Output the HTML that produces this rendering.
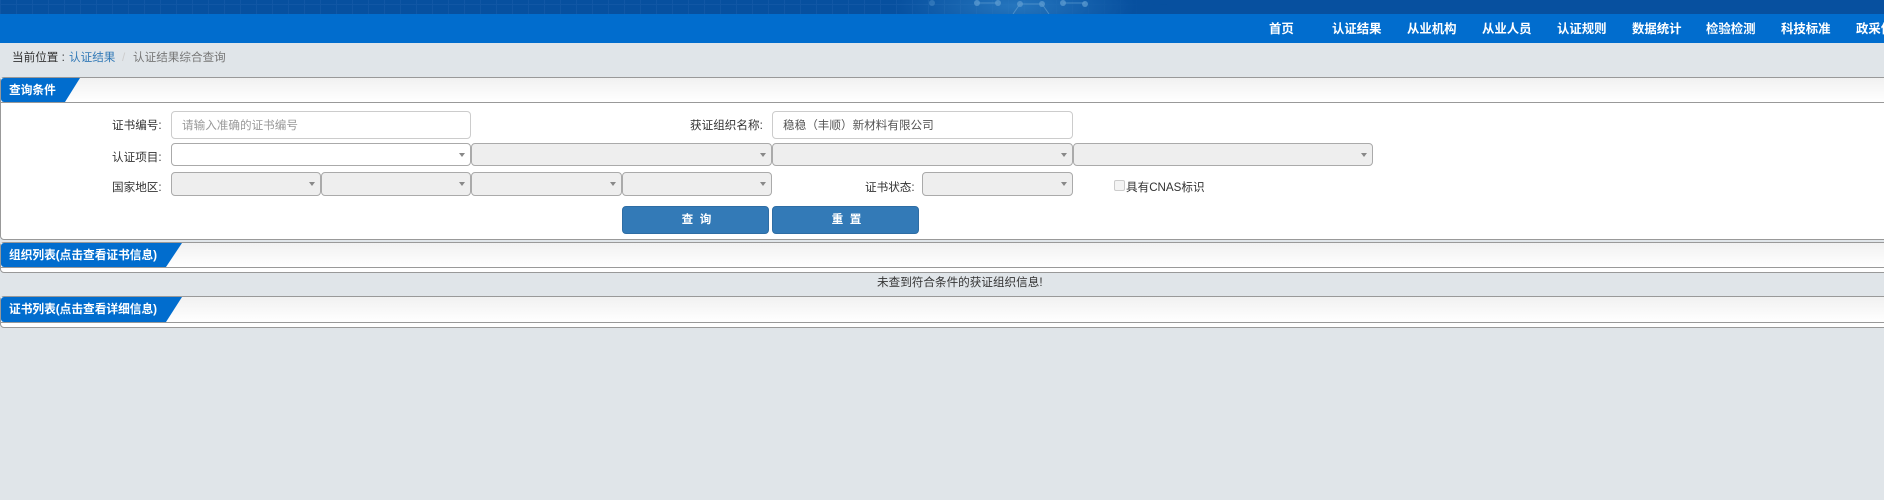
<!DOCTYPE html>
<html lang="zh-CN">
<head>
<meta charset="utf-8">
<title>认证结果综合查询</title>
<style>
html,body{margin:0;padding:0;width:1884px;height:500px;overflow:hidden;background:#e0e5e9;}
body{position:relative;font-family:"Liberation Sans","Noto Sans CJK SC",sans-serif;font-size:11.6px;color:#333;}
.a{position:absolute;white-space:nowrap;}
.band{position:absolute;left:0;top:0;width:1884px;height:14px;background-color:#07509f;overflow:hidden;}
.nav{position:absolute;left:0;top:14px;width:1884px;height:29px;background:#016dce;}
.n{position:absolute;top:20px;line-height:18px;color:#fff;font-weight:bold;font-size:12.4px;white-space:nowrap;}
.panel{position:absolute;left:0;width:1890px;box-sizing:border-box;border:1px solid #999;border-radius:4px;background:#fff;}
.hd{position:absolute;left:0;top:0;right:0;height:24px;border-bottom:1px solid #999;background:linear-gradient(#f1f1f1,#fff);}
.tab{position:absolute;left:0;top:0;height:24px;background:#016dce;border-radius:3px 0 0 3px;}
.tt{position:absolute;left:7px;top:0;line-height:25px;color:#fff;font-weight:bold;font-size:11.7px;white-space:nowrap;}
.lbl{position:absolute;white-space:nowrap;color:#333;line-height:18px;text-align:right;}
.inp{position:absolute;box-sizing:border-box;height:28px;top:111px;background:#fff;border:1px solid #ccc;border-radius:4px;line-height:27px;padding-left:10px;white-space:nowrap;}
.sel{position:absolute;box-sizing:border-box;border:1px solid #aaa;border-radius:4px;background:#eee;}
.sel.w{background:#fff;}
.sel:after{content:"";position:absolute;right:5px;top:50%;margin-top:-2px;border-style:solid;border-width:4px 3px 0 3px;border-color:#888 transparent transparent transparent;}
.r1{top:143px;height:23px;}
.r2{top:172px;height:24px;}
.btn{position:absolute;top:206px;height:28px;box-sizing:border-box;background:#337ab7;border:1px solid #2e6da4;border-radius:4px;color:#fff;font-weight:bold;text-align:center;line-height:26px;padding-left:2px;}
</style>
</head>
<body>
<div class="band">
<svg width="1884" height="14" style="position:absolute;left:0;top:0">
<defs>
<pattern id="g" width="16" height="14" patternUnits="userSpaceOnUse"><path d="M0.5 0V14M0 4.5H16" stroke="#2a6cb4" stroke-opacity=".3" fill="none"/></pattern>
<linearGradient id="fade" x1="0" x2="1"><stop offset="0" stop-color="#fff"/><stop offset=".5" stop-color="#fff"/><stop offset=".62" stop-color="#000"/></linearGradient>
<mask id="m"><rect width="1884" height="14" fill="url(#fade)"/></mask>
<radialGradient id="glow"><stop offset="0" stop-color="#2f82c8" stop-opacity=".75"/><stop offset="1" stop-color="#2f82c8" stop-opacity="0"/></radialGradient>
</defs>
<rect width="1884" height="14" fill="url(#g)" mask="url(#m)"/>
<ellipse cx="1015" cy="6" rx="120" ry="34" fill="url(#glow)"/>
<g stroke="#5c9bd0" stroke-opacity=".7" fill="none">
<path d="M977 3H998M1020 4H1042M1063 3H1085"/>
<path d="M1020 4L1013 14M1042 4L1049 14"/>
</g>
<g fill="#5c9bd0" fill-opacity=".75">
<circle cx="977" cy="3" r="3"/><circle cx="998" cy="3" r="3"/><circle cx="1020" cy="4" r="3"/><circle cx="1042" cy="4" r="3"/><circle cx="1063" cy="3" r="3"/><circle cx="1085" cy="4" r="3"/><circle cx="932" cy="3" r="3" fill-opacity=".4"/>
</g>
</svg>
</div>
<div class="nav"></div>
<div class="n" style="left:1269px">首页</div>
<div class="n" style="left:1332px">认证结果</div>
<div class="n" style="left:1407px">从业机构</div>
<div class="n" style="left:1482px">从业人员</div>
<div class="n" style="left:1557px">认证规则</div>
<div class="n" style="left:1632px">数据统计</div>
<div class="n" style="left:1706px">检验检测</div>
<div class="n" style="left:1781px">科技标准</div>
<div class="n" style="left:1856px">政采信息</div>

<div class="a" style="left:12px;top:49px;line-height:18px;color:#333">当前位置 :</div>
<div class="a" style="left:69px;top:49px;line-height:18px;color:#337ab7">认证结果</div>
<div class="a" style="left:122px;top:49px;line-height:18px;color:#ccc">/</div>
<div class="a" style="left:133px;top:49px;line-height:18px;color:#777">认证结果综合查询</div>

<div class="panel" style="top:77px;height:163px">
  <div class="hd"></div>
  <div class="tab" style="width:79px;clip-path:polygon(0 0,100% 0,64px 100%,0 100%)"><div class="tt" style="left:8px">查询条件</div></div>
</div>

<div class="lbl" style="left:112px;top:117px">证书编号:</div>
<div class="inp" style="left:171px;width:300px;color:#999">请输入准确的证书编号</div>
<div class="lbl" style="left:690px;top:117px">获证组织名称:</div>
<div class="inp" style="left:772px;width:301px;color:#555">稳稳（丰顺）新材料有限公司</div>

<div class="lbl" style="left:112px;top:149px">认证项目:</div>
<div class="sel w r1" style="left:171px;width:300px"></div>
<div class="sel r1" style="left:471px;width:301px"></div>
<div class="sel r1" style="left:772px;width:301px"></div>
<div class="sel r1" style="left:1073px;width:300px"></div>

<div class="lbl" style="left:112px;top:179px">国家地区:</div>
<div class="sel r2" style="left:171px;width:150px"></div>
<div class="sel r2" style="left:321px;width:150px"></div>
<div class="sel r2" style="left:471px;width:151px"></div>
<div class="sel r2" style="left:622px;width:150px"></div>
<div class="lbl" style="left:865px;top:179px">证书状态:</div>
<div class="sel r2" style="left:922px;width:151px"></div>

<div class="a" style="left:1114px;top:180px;width:11px;height:11px;box-sizing:border-box;border:1px solid #ccc;border-radius:2px;background:#f4f4f4"></div>
<div class="lbl" style="left:1126px;top:179px">具有CNAS标识</div>

<div class="btn" style="left:622px;width:147px">查&nbsp;&nbsp;询</div>
<div class="btn" style="left:772px;width:147px">重&nbsp;&nbsp;置</div>

<div class="panel" style="top:242px;height:31px">
  <div class="hd"></div>
  <div class="tab" style="width:181px;clip-path:polygon(0 0,100% 0,165px 100%,0 100%)"><div class="tt" style="left:8px">组织列表(点击查看证书信息)</div></div>
</div>

<div class="a" style="left:877px;top:274px;line-height:18px;color:#333">未查到符合条件的获证组织信息!</div>

<div class="panel" style="top:296px;height:32px">
  <div class="hd" style="height:25px"></div>
  <div class="tab" style="width:181px;height:25px;clip-path:polygon(0 0,100% 0,165px 100%,0 100%)"><div class="tt" style="left:8px">证书列表(点击查看详细信息)</div></div>
</div>
</body>
</html>
